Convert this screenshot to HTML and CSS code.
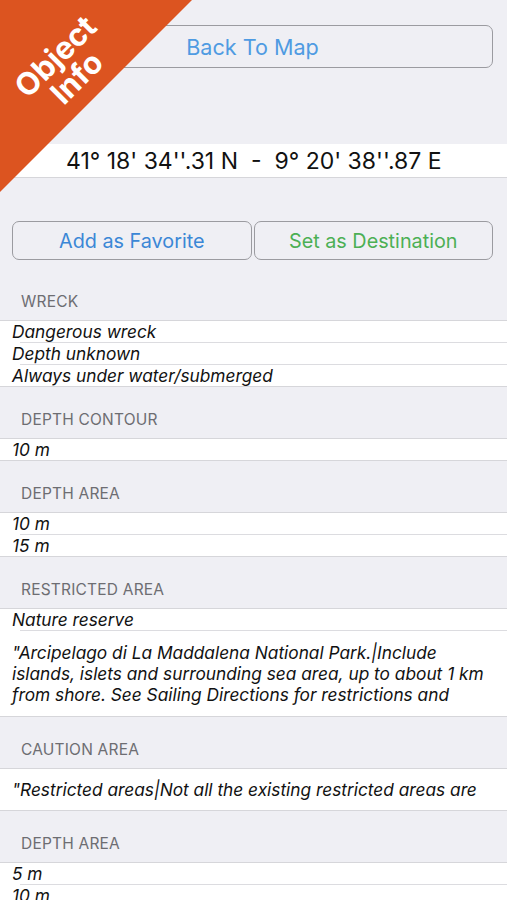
FILE: index.html
```html
<!DOCTYPE html>
<html lang="en">
<head>
<meta charset="utf-8">
<title>Object Info</title>
<link rel="stylesheet" href="styles.css">
</head>
<body>
<main class="screen">
  <div class="top-bar">
    <button class="btn btn-back">Back To Map</button>
  </div>

  <div class="coords">41° 18' 34''.31 N &nbsp;-&nbsp; 9° 20' 38''.87 E</div>

  <div class="actions">
    <button class="btn btn-fav">Add as Favorite</button>
    <button class="btn btn-dest">Set as Destination</button>
  </div>

  <section class="group group-first">
    <h2 class="group-title">WRECK</h2>
    <ul class="rows">
      <li class="row">Dangerous wreck</li>
      <li class="row">Depth unknown</li>
      <li class="row">Always under water/submerged</li>
    </ul>
  </section>

  <section class="group">
    <h2 class="group-title">DEPTH CONTOUR</h2>
    <ul class="rows">
      <li class="row">10 m</li>
    </ul>
  </section>

  <section class="group">
    <h2 class="group-title">DEPTH AREA</h2>
    <ul class="rows">
      <li class="row">10 m</li>
      <li class="row">15 m</li>
    </ul>
  </section>

  <section class="group">
    <h2 class="group-title">RESTRICTED AREA</h2>
    <ul class="rows">
      <li class="row">Nature reserve</li>
      <li class="row row-text">
        <span class="line">"Arcipelago di La Maddalena National Park.|Include</span>
        <span class="line">islands, islets and surrounding sea area, up to about 1 km</span>
        <span class="line">from shore. See Sailing Directions for restrictions and</span>
      </li>
    </ul>
  </section>

  <section class="group">
    <h2 class="group-title">CAUTION AREA</h2>
    <ul class="rows">
      <li class="row row-text row-single">
        <span class="line">"Restricted areas|Not all the existing restricted areas are</span>
      </li>
    </ul>
  </section>

  <section class="group">
    <h2 class="group-title">DEPTH AREA</h2>
    <ul class="rows">
      <li class="row">5 m</li>
      <li class="row">10 m</li>
      <li class="row">15 m</li>
    </ul>
  </section>
</main>

<div class="ribbon">
  <svg class="ribbon-shape" width="192" height="192" viewBox="0 0 192 192">
    <polygon points="0,0 192,0 0,192" fill="#dc5420"/>
  </svg>
  <div class="ribbon-label">Object<br>Info</div>
</div>
</body>
</html>
```

FILE: styles.css
```css
html, body {
  margin: 0;
  padding: 0;
}

body {
  background: #efeff4;
  font-family: Inter, "Noto Sans", "DejaVu Sans", sans-serif;
  color: #000;
  width: 507px;
  height: 900px;
  overflow: hidden;
  position: relative;
}

.screen {
  display: flex;
  flex-direction: column;
}

.btn {
  font-family: inherit;
  background: #efeff4;
  border: 1.5px solid #9b9ba0;
  border-radius: 7px;
  padding: 0;
  margin: 0;
  cursor: pointer;
}

.top-bar {
  display: flex;
  padding: 25px 14px 0 12px;
}

.btn-back {
  flex: 1;
  height: 43px;
  font-size: 21.6px;
  color: #4f9be2;
}

.coords {
  margin-top: 76px;
  height: 34px;
  line-height: 34px;
  background: #fff;
  border-bottom: 1px solid #d6d6da;
  box-sizing: border-box;
  padding-left: 66px;
  font-size: 23px;
  color: #111;
}

.actions {
  display: flex;
  gap: 2px;
  margin-top: 43px;
  padding: 0 14px 0 12px;
}

.actions .btn {
  flex: 1;
  height: 39px;
  font-size: 19.8px;
}

.btn-fav {
  color: #3b87d6;
}

.btn-dest {
  color: #4caf54;
}

.group-first {
  margin-top: 8px;
}

.group-title {
  margin: 0;
  padding: 24px 21px 9px;
  line-height: 18px;
  font-size: 15.5px;
  letter-spacing: 0.2px;
  font-weight: 400;
  color: #6d6d72;
}

.group-first .group-title {
  padding-top: 25px;
}

.rows {
  list-style: none;
  margin: 0;
  padding: 0;
  background: #fff;
  border-top: 1px solid #d6d6da;
  border-bottom: 1px solid #d6d6da;
}

.row {
  position: relative;
  padding: 0 12px;
  line-height: 21px;
  font-size: 17.3px;
  font-style: italic;
  color: #111;
  white-space: nowrap;
  overflow: hidden;
}

.row + .row {
  padding-top: 1px;
}

.row + .row::before {
  content: "";
  position: absolute;
  left: 20px;
  right: 0;
  top: 0;
  height: 1px;
  background: #dcdce0;
}

.row-text {
  padding-top: 11px;
  padding-bottom: 11px;
}

.row + .row-text {
  padding-top: 12px;
}

.row-single {
  padding-top: 10px;
  padding-bottom: 10px;
}

.line {
  display: block;
}

.ribbon {
  position: absolute;
  left: 0;
  top: 0;
  width: 192px;
  height: 192px;
  pointer-events: none;
}

.ribbon-shape {
  display: block;
}

.ribbon-label {
  position: absolute;
  left: -34px;
  top: 37px;
  width: 200px;
  text-align: center;
  font-size: 31px;
  line-height: 30px;
  font-weight: 700;
  color: #fff;
  transform: rotate(-45deg);
}
```
